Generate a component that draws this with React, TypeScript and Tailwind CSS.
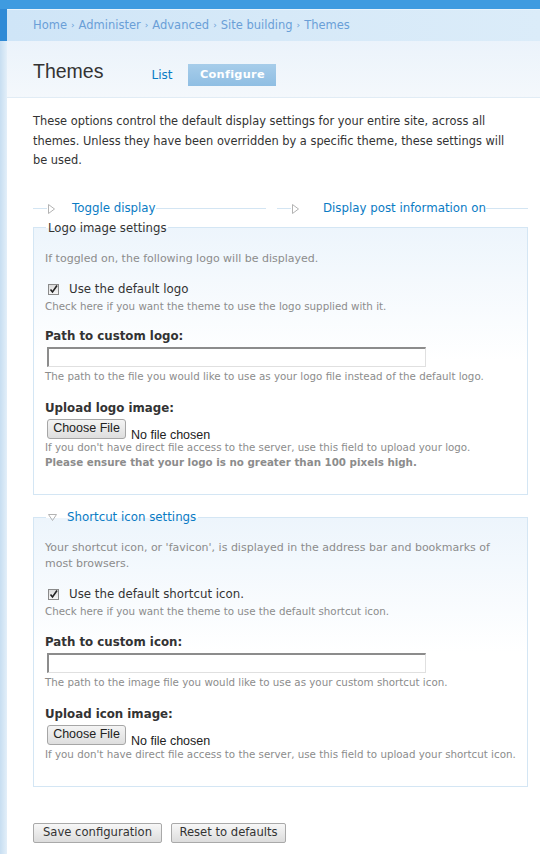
import React from 'react'

const LINK = 'text-[#0a7bc4]'
const DESC = 'text-[10.3px] leading-[15px] text-[#8c8c8c] whitespace-nowrap'
const LABEL = 'font-bold text-[11.8px] leading-[16px] text-[#333]'

function Arrow({ down = false }: { down?: boolean }) {
  return down ? (
    <svg width="9" height="7" viewBox="0 0 9 7" className="shrink-0">
      <path d="M0.5 0.5 H8.5 L4.5 6.5 Z" fill="none" stroke="#b3b3b3" strokeWidth="1" />
    </svg>
  ) : (
    <svg width="7" height="10" viewBox="0 0 7 10" className="shrink-0">
      <path d="M0.5 0.5 V9.5 L6.5 5 Z" fill="none" stroke="#b3b3b3" strokeWidth="1" />
    </svg>
  )
}

function Check() {
  return (
    <span className="w-[11px] h-[11px] shrink-0 border border-[#8a8a8a] bg-gradient-to-b from-[#dcdcdc] to-[#f6f6f6] flex items-center justify-center">
      <svg width="9" height="9" viewBox="0 0 9 9">
        <path d="M1.5 4.5 L3.5 7 L8 0.5" fill="none" stroke="#222" strokeWidth="1.6" />
      </svg>
    </span>
  )
}

function FileField() {
  return (
    <div className="flex items-end gap-[5px] font-['Liberation_Sans',Arial,sans-serif] text-[12.5px] text-[#222]">
      <span className="h-[20px] w-[79px] flex items-center justify-center border border-[#a6a6a6] rounded-[3px] bg-gradient-to-b from-[#f4f4f4] to-[#dedede]">Choose File</span>
      <span className="leading-none mb-[-3px]">No file chosen</span>
    </div>
  )
}

function Collapsed({ label, className, gap }: { label: string; className: string; gap: string }) {
  return (
    <div className={`${className} h-[16px] flex items-center`}>
      <span className="w-[14px] h-px bg-[#d3e5f3]" />
      <span className="mx-[1px]"><Arrow /></span>
      <span className={`${LINK} ${gap} text-[11.8px] whitespace-nowrap`}>{label}</span>
      <span className="flex-1 h-px bg-[#d3e5f3]" />
    </div>
  )
}

function TextInput() {
  return <div className="ml-[2px] w-[379px] h-[20px] border border-[#e0e0e0] border-t-[#8c8c8c] border-l-[#8c8c8c] border-t-2 border-l-2 bg-white" />
}

export default function App() {
  return (
    <div className="w-[540px] h-[854px] overflow-hidden flex flex-col bg-[#3f9be0] font-['DejaVu_Sans',Verdana,sans-serif] text-[#333]">
      <div className="h-[9px] shrink-0" />
      <div className="flex flex-1">
        <div className="w-[7px] shrink-0 flex flex-col">
          <div className="h-[32px] bg-[#2f8ad6]" />
          <div className="flex-1 bg-gradient-to-r from-[#c7def1] to-[#e3eff9]" />
        </div>
        <div className="flex-1 flex flex-col bg-white">
          <div className="h-[32px] bg-gradient-to-r from-[#cfe5f7] via-[#d6e9f8] to-[#dbecf9] border-t border-[#e8f3fc] flex items-center pl-[26px] pt-[1px] text-[11.5px] text-[#6a9fd7]">
            Home <span className="mx-[4px] text-[9px]">›</span> Administer <span className="mx-[4px] text-[9px]">›</span> Advanced <span className="mx-[4px] text-[9px]">›</span> Site building <span className="mx-[4px] text-[9px]">›</span> Themes
          </div>
          <div className="h-[57px] bg-gradient-to-b from-[#ebf3fb] to-[#f4f8fc] border-b border-[#e1ecf5] flex items-center pl-[26px]">
            <h1 className="font-['Liberation_Sans',Arial,sans-serif] text-[19.5px] text-[#333] mt-[6px]">Themes</h1>
            <span className={`${LINK} ml-[48px] mt-[12px] text-[12px]`}>List</span>
            <span className="ml-[16px] mt-[12px] h-[22px] w-[88px] flex items-center justify-center bg-gradient-to-b from-[#a7cdea] to-[#8fbee3] text-white font-bold text-[11.3px] tracking-[0.3px]">Configure</span>
          </div>
          <div className="pl-[26px] pr-[13px] pt-[14px]">
            <p className="text-[11.4px] leading-[19.5px] text-[#333] pr-[8px]">
              These options control the default display settings for your entire site, across all themes. Unless they have been overridden by a specific theme, these settings will be used.
            </p>
            <div className="flex mt-[30px] gap-[11px]">
              <Collapsed label="Toggle display" className="w-[233px]" gap="ml-[16px]" />
              <Collapsed label="Display post information on" className="flex-1" gap="ml-[23px]" />
            </div>

            <fieldset className="mt-[3px] border border-[#d4e6f4] bg-gradient-to-b from-[#edf5fc] via-white to-white px-[11px] pb-[24px]">
              <legend className="px-[2px] ml-[1px] text-[11.7px] leading-[16px] text-[#333]">Logo image settings</legend>
              <p className="mt-[15px] text-[11px] leading-[15px] text-[#8c8c8c]">If toggled on, the following logo will be displayed.</p>
              <div className="mt-[16px] h-[16px] flex items-center gap-[10px] pl-[3px] text-[11.8px]"><Check />Use the default logo</div>
              <p className={`mt-[1px] ${DESC}`}>Check here if you want the theme to use the logo supplied with it.</p>
              <p className={`mt-[14px] ${LABEL}`}>Path to custom logo:</p>
              <div className="mt-[3px]"><TextInput /></div>
              <p className={`mt-[2px] ${DESC}`}>The path to the file you would like to use as your logo file instead of the default logo.</p>
              <p className={`mt-[16px] ${LABEL}`}>Upload logo image:</p>
              <div className="mt-[3px] ml-[2px]"><FileField /></div>
              <p className={`mt-[1px] ${DESC}`}>If you don't have direct file access to the server, use this field to upload your logo.</p>
              <p className={`${DESC} font-bold text-[#7f7f7f]`}>Please ensure that your logo is no greater than 100 pixels high.</p>
            </fieldset>

            <fieldset className="mt-[15px] border border-[#d4e6f4] bg-gradient-to-b from-[#edf5fc] via-white to-white px-[11px] pb-[24px]">
              <legend className="px-[2px] ml-[1px] h-[16px] flex items-center text-[11.8px]">
                <Arrow down />
                <span className={`${LINK} ml-[10px]`}>Shortcut icon settings</span>
              </legend>
              <p className="mt-[14px] text-[11px] leading-[16px] text-[#8c8c8c] pr-[4px]">Your shortcut icon, or 'favicon', is displayed in the address bar and bookmarks of most browsers.</p>
              <div className="mt-[15px] h-[16px] flex items-center gap-[10px] pl-[3px] text-[11.8px]"><Check />Use the default shortcut icon.</div>
              <p className={`mt-[1px] ${DESC}`}>Check here if you want the theme to use the default shortcut icon.</p>
              <p className={`mt-[15px] ${LABEL}`}>Path to custom icon:</p>
              <div className="mt-[3px]"><TextInput /></div>
              <p className={`mt-[2px] ${DESC}`}>The path to the image file you would like to use as your custom shortcut icon.</p>
              <p className={`mt-[16px] ${LABEL}`}>Upload icon image:</p>
              <div className="mt-[3px] ml-[2px]"><FileField /></div>
              <p className={`mt-[2px] ${DESC}`}>If you don't have direct file access to the server, use this field to upload your shortcut icon.</p>
            </fieldset>

            <div className="mt-[36px] flex gap-[9px] text-[11.6px] text-[#333]">
              <span className="h-[20px] w-[129px] flex items-center justify-center border border-[#a9a9a9] rounded-[2px] bg-gradient-to-b from-[#f7f7f7] to-[#dcdcdc]">Save configuration</span>
              <span className="h-[20px] w-[115px] flex items-center justify-center border border-[#a9a9a9] rounded-[2px] bg-gradient-to-b from-[#f7f7f7] to-[#dcdcdc]">Reset to defaults</span>
            </div>
          </div>
        </div>
      </div>
    </div>
  )
}
